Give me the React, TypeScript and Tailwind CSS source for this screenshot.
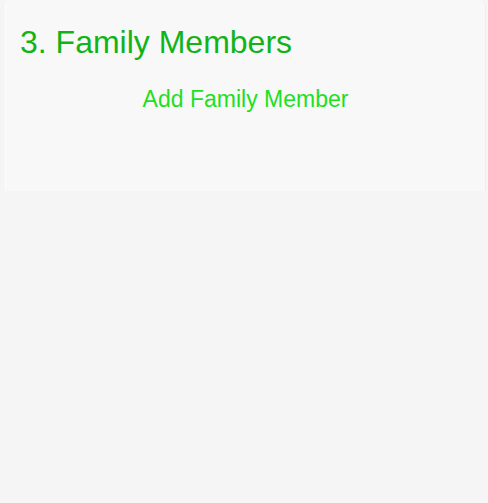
import React from "react";

export default function App() {
  return (
    <div className="min-h-[503px] w-full bg-[#f5f5f5] pl-[5px] pr-[2px]" style={{ fontFamily: '"Liberation Sans", Arial, sans-serif' }}>
      <div className="h-[191px] w-full rounded-t-[6px] border-l border-l-[#fdfdfd] border-r border-r-[#eeeeee] bg-[#f8f8f8] px-[14px] pt-[24px]">
        <h2 className="text-[32px] leading-[37px] text-[#10b418]">3. Family Members</h2>
        <div className="mt-[25px] text-center">
          <a href="#" className="text-[23px] leading-[26px] text-[#1ee01e]">Add Family Member</a>
        </div>
      </div>
    </div>
  );
}
